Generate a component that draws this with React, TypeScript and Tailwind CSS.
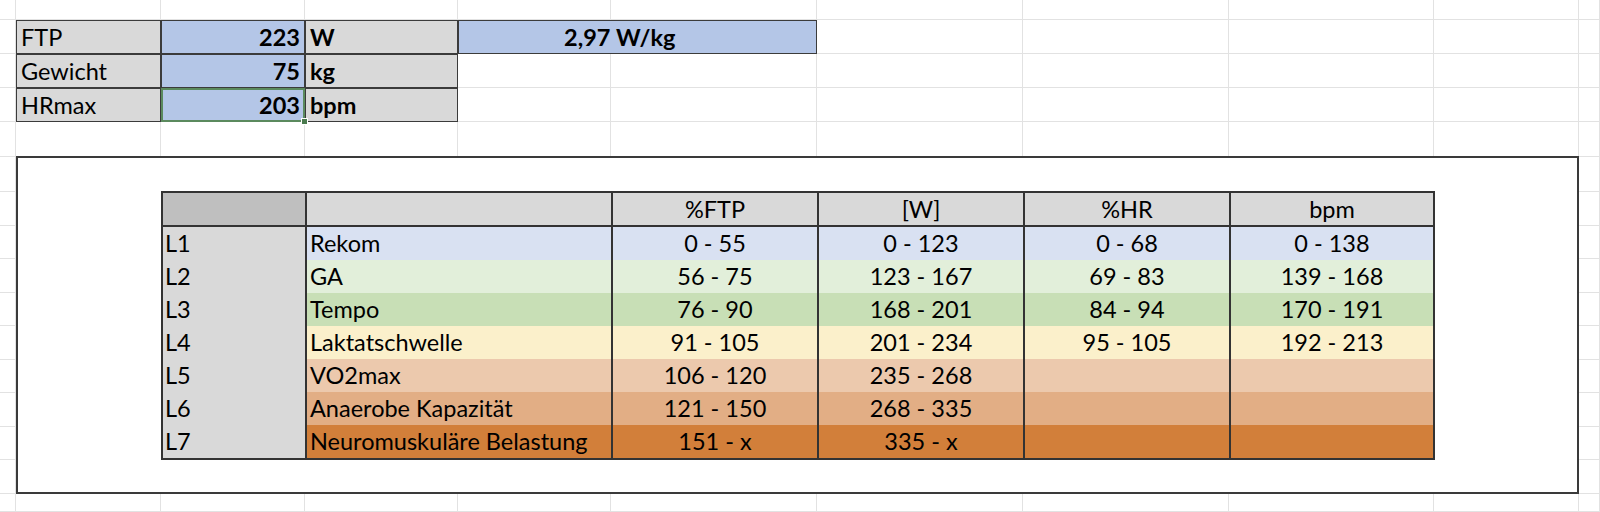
const zones = [
  { l: "L1", name: "Rekom", ftp: "0 - 55", w: "0 - 123", hr: "0 - 68", bpm: "0 - 138", bg: "bg-[#d9e1f2]" },
  { l: "L2", name: "GA", ftp: "56 - 75", w: "123 - 167", hr: "69 - 83", bpm: "139 - 168", bg: "bg-[#e2efda]" },
  { l: "L3", name: "Tempo", ftp: "76 - 90", w: "168 - 201", hr: "84 - 94", bpm: "170 - 191", bg: "bg-[#c8dfb6]" },
  { l: "L4", name: "Laktatschwelle", ftp: "91 - 105", w: "201 - 234", hr: "95 - 105", bpm: "192 - 213", bg: "bg-[#fbf0cb]" },
  { l: "L5", name: "VO2max", ftp: "106 - 120", w: "235 - 268", hr: "", bpm: "", bg: "bg-[#ecc9ad]" },
  { l: "L6", name: "Anaerobe Kapazität", ftp: "121 - 150", w: "268 - 335", hr: "", bpm: "", bg: "bg-[#e2ae85]" },
  { l: "L7", name: "Neuromuskuläre Belastung", ftp: "151 - x", w: "335 - x", hr: "", bpm: "", bg: "bg-[#d27f3a]" },
];

const COLS = 11;
const ROWS = 16;

// spreadsheet background gridlines
const GridCells = () => (
  <>
    {Array.from({ length: COLS * ROWS }).map((_, i) => (
      <div key={i} className="border-r border-b border-[#e2e2e2]" />
    ))}
  </>
);

const cell = "border border-[#3b3b3b] leading-[32px] whitespace-nowrap overflow-hidden";

export default function App() {
  return (
    <div className="w-[1600px] h-[512px] bg-white text-black text-[23.5px] font-[family-name:Lato,sans-serif] overflow-hidden">
      <div className="relative grid grid-cols-[16px_145px_144px_153px_153px_206px_206px_206px_205px_145px_1fr] grid-rows-[20px_34px_34px_34px_35px_35px_34px_33px_34px_33px_34px_33px_34px_33px_34px_18px] grid-flow-row h-full">
        <GridCells />

        {/* input block */}
        <div className={`${cell} col-start-2 row-start-2 bg-[#d9d9d9] px-[4px]`}>FTP</div>
        <div className={`${cell} col-start-3 row-start-2 bg-[#b4c6e7] px-[4px] text-right font-bold`}>223</div>
        <div className={`${cell} col-start-4 row-start-2 bg-[#d9d9d9] px-[4px] font-bold`}>W</div>
        <div className={`${cell} col-start-5 col-end-7 row-start-2 bg-[#b4c6e7] pl-[105px] font-bold`}>2,97 W/kg</div>

        <div className={`${cell} col-start-2 row-start-3 bg-[#d9d9d9] px-[4px]`}>Gewicht</div>
        <div className={`${cell} col-start-3 row-start-3 bg-[#b4c6e7] px-[4px] text-right font-bold`}>75</div>
        <div className={`${cell} col-start-4 row-start-3 bg-[#d9d9d9] px-[4px] font-bold`}>kg</div>

        <div className={`${cell} col-start-2 row-start-4 bg-[#d9d9d9] px-[4px]`}>HRmax</div>
        <div className="relative col-start-3 row-start-4 bg-[#b4c6e7] border-2 border-[#5b8a5e] px-[3px] text-right font-bold leading-[30px]">
          203
          <span className="absolute -right-[5px] -bottom-[5px] w-[7px] h-[7px] bg-[#4a7a4e] border border-white" />
        </div>
        <div className={`${cell} col-start-4 row-start-4 bg-[#d9d9d9] px-[4px] font-bold`}>bpm</div>

        {/* framed area */}
        <div className="col-start-2 col-end-11 row-start-6 row-end-16 -mt-[1px] bg-white border-2 border-[#3a3a3a]" />

        {/* zones table */}
        <div className="col-start-3 col-end-10 row-start-7 row-end-15 grid grid-cols-[144px_306px_206px_206px_206px_1fr] grid-rows-[34px_repeat(7,1fr)] border-2 border-[#333] -mt-[1px] -mr-[1px]">
          <div className="bg-[#bfbfbf] border-r-2 border-b-2 border-[#333]" />
          <div className="bg-[#d9d9d9] border-r-2 border-b-2 border-[#333]" />
          {["%FTP", "[W]", "%HR", "bpm"].map((h, i) => (
            <div
              key={h}
              className={`bg-[#d9d9d9] border-b-2 border-[#333] text-center leading-[33px] ${i < 3 ? "border-r-2" : ""}`}
            >
              {h}
            </div>
          ))}
          {zones.map((z) => (
            <div key={z.l} className="contents">
              <div className="bg-[#d9d9d9] border-r-2 border-[#333] pl-[2px] leading-[33px]">{z.l}</div>
              <div className={`${z.bg} border-r-2 border-[#333] pl-[3px] leading-[33px] whitespace-nowrap`}>{z.name}</div>
              <div className={`${z.bg} border-r-2 border-[#333] text-center leading-[33px]`}>{z.ftp}</div>
              <div className={`${z.bg} border-r-2 border-[#333] text-center leading-[33px]`}>{z.w}</div>
              <div className={`${z.bg} border-r-2 border-[#333] text-center leading-[33px]`}>{z.hr}</div>
              <div className={`${z.bg} text-center leading-[33px]`}>{z.bpm}</div>
            </div>
          ))}
        </div>
      </div>
    </div>
  );
}
